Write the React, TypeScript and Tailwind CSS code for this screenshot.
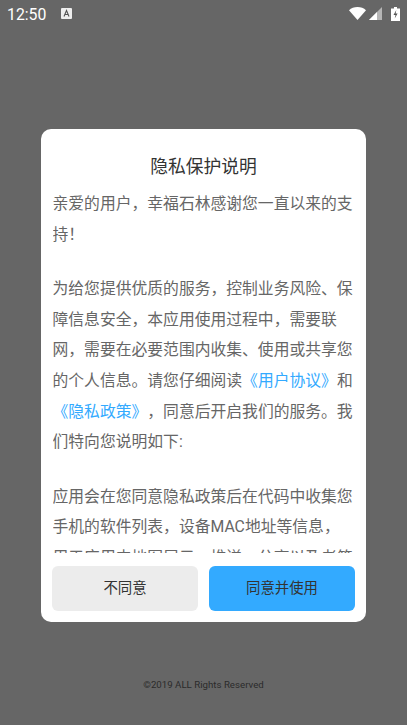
export default function App() {
  const font = { fontFamily: '"Roboto", "Noto Sans CJK SC", sans-serif' };
  return (
    <div lang="zh-CN" style={font} className="flex h-[725px] w-[407px] flex-col overflow-hidden bg-[#666666]">
      <div className="flex h-[27px] shrink-0 items-center pl-[7px] pr-[7px] text-white">
        <span className="pt-[2px] text-[15.8px] leading-none">12:50</span>
        <svg className="ml-[15px]" width="11" height="11" viewBox="0 0 11 11">
          <rect width="11" height="11" rx="1" fill="#eee" />
          <path d="M3 8.5 5.5 2.5 8 8.5M4 6.5h3" stroke="#555" strokeWidth="1.1" fill="none" />
        </svg>
        <div className="ml-auto flex items-center">
          <svg width="17" height="13" viewBox="0 0 17 13">
            <path d="M0 3.2C2.2 1.2 5.2 0 8.5 0s6.3 1.2 8.5 3.2L8.5 13z" fill="#fff" />
          </svg>
          <svg className="ml-[3px]" width="13" height="13" viewBox="0 0 13 13">
            <path d="M13 0v13H0z" fill="#b5b5b5" />
            <path d="M8 5v8H0z" fill="#fff" />
          </svg>
          <svg className="ml-[9px]" width="9" height="14" viewBox="0 0 9 14">
            <path d="M3 0h3v1.4h3V14H0V1.4h3z" fill="#fff" />
            <path d="M5.3 3 2.5 8h2L3.7 11.5 6.6 6.4H4.6z" fill="#555" />
          </svg>
        </div>
      </div>
      <div className="mt-[102px] ml-[41px] flex h-[493px] w-[325px] shrink-0 flex-col rounded-[10px] bg-white">
        <div className="mt-[26px] text-center text-[17.8px] leading-[24px] text-[#333333]">隐私保护说明</div>
        <div className="mt-[10px] ml-[11.5px] h-[364px] w-[302px] overflow-hidden text-[15.8px] leading-[30.6px] text-[#666666] [text-spacing-trim:space-all]">
          <p>亲爱的用户，幸福石林感谢您一直以来的支持！</p>
          <p className="mt-[24px]">
            为给您提供优质的服务，控制业务风险、保障信息安全，本应用使用过程中，需要联网，需要在必要范围内收集、使用或共享您的个人信息。请您仔细阅读
            <span className="text-[#33aaff]">《用户协议》</span>和
            <span className="text-[#33aaff]">《隐私政策》</span>，同意后开启我们的服务。我们特向您说明如下:
          </p>
          <p className="mt-[24px]">
            应用会在您同意隐私政策后在代码中收集您手机的软件列表，设备MAC地址等信息，用于应用内地图展示、推送、分享以及老第三方服务
          </p>
        </div>
        <div className="mt-[13px] flex gap-[11px] px-[11px]">
          <button className="h-[45px] w-[146px] rounded-[6px] bg-[#ececec] text-[14.4px] text-[#333333]">不同意</button>
          <button className="h-[45px] w-[146px] rounded-[6px] bg-[#33aaff] text-[14.4px] text-[#333333]">同意并使用</button>
        </div>
      </div>
      <div className="mt-[56px] text-center text-[9.7px] leading-[14px] text-[#2b2b2b]">©2019 ALL Rights Reserved</div>
    </div>
  );
}
